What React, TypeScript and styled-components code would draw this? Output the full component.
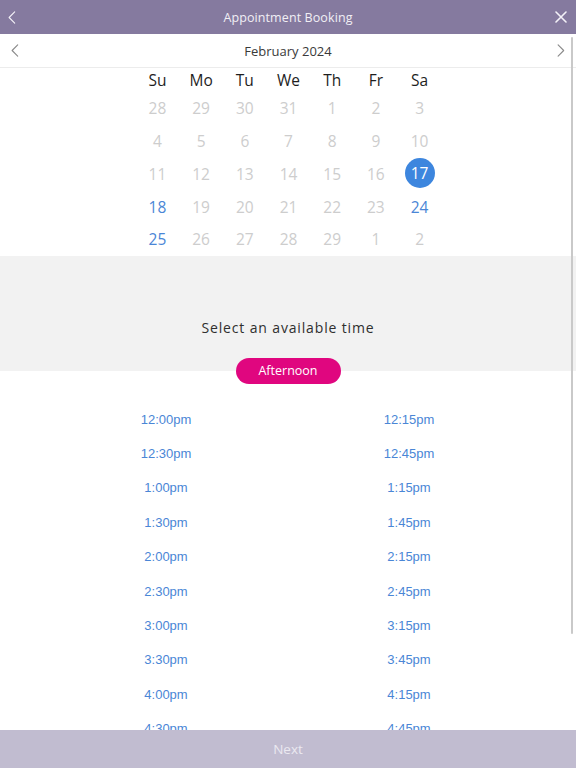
import React from "react";
import styled, { createGlobalStyle } from "styled-components";

const Global = createGlobalStyle`
  html, body { margin: 0; padding: 0; background: #fff; }
  body { font-family: "Open Sans", "Noto Sans", sans-serif; }
  * { box-sizing: border-box; }
`;

const Page = styled.div`
  position: relative;
  width: 576px;
  height: 768px;
  display: flex;
  flex-direction: column;
  overflow: hidden;
  background: #fff;
`;

const TopBar = styled.header`
  height: 34px;
  flex: none;
  background: #857a9f;
  display: grid;
  grid-template-columns: 40px 1fr 40px;
  align-items: center;
`;

const Title = styled.div`
  text-align: center;
  color: #f1eff5;
  font-size: 12.5px;
  letter-spacing: 0.1px;
`;

const IconButton = styled.div<{ $align: "left" | "right"; $inset: number }>`
  display: flex;
  justify-content: ${(p) => (p.$align === "left" ? "flex-start" : "flex-end")};
  padding: ${(p) => (p.$align === "left" ? `0 0 0 ${p.$inset}px` : `0 ${p.$inset}px 0 0`)};
  align-items: center;
  height: 100%;
`;

const MonthBar = styled.div`
  height: 34px;
  flex: none;
  display: grid;
  grid-template-columns: 40px 1fr 40px;
  align-items: center;
  border-bottom: 1px solid #ececec;
`;

const MonthLabel = styled.div`
  text-align: center;
  color: #3a3a3a;
  font-size: 13px;
`;

const Calendar = styled.div`
  flex: none;
  display: grid;
  grid-template-columns: repeat(7, 43.7px);
  grid-auto-rows: 32.75px;
  grid-template-rows: 24px;
  justify-content: center;
  padding-left: 1px;
  height: 188px;
`;

const WeekDay = styled.div`
  display: flex;
  align-items: center;
  justify-content: center;
  font-size: 15.5px;
  color: #1e1e1e;
`;

const Day = styled.div<{ $kind: "muted" | "open" | "selected" }>`
  display: flex;
  align-items: center;
  justify-content: center;
  font-size: 15.5px;
  color: ${(p) => (p.$kind === "muted" ? "#cdcdcd" : p.$kind === "open" ? "#4a86d6" : "#fff")};
`;

const Selected = styled.span`
  width: 30px;
  height: 30px;
  border-radius: 50%;
  background: #3d86de;
  display: flex;
  align-items: center;
  justify-content: center;
  color: #fff;
  margin-top: -1px;
`;

const TimeHeader = styled.section`
  flex: none;
  height: 115px;
  background: #f2f2f2;
  display: flex;
  justify-content: center;
  padding-top: 62px;
`;

const Prompt = styled.div`
  font-size: 14px;
  letter-spacing: 0.85px;
  color: #2f2f2f;
`;

const PillRow = styled.div`
  flex: none;
  display: flex;
  justify-content: center;
  margin-top: -13px;
  position: relative;
`;

const Pill = styled.div`
  width: 105px;
  height: 26px;
  border-radius: 13px;
  background: #e0067f;
  color: #fff;
  font-size: 12.5px;
  display: flex;
  align-items: center;
  justify-content: center;
  padding-bottom: 2px;
`;

const TimeList = styled.div`
  flex: 1;
  overflow: hidden;
  display: grid;
  grid-template-columns: repeat(2, 243px);
  grid-auto-rows: 34.4px;
  justify-content: center;
  padding-top: 18px;
  padding-right: 1px;
`;

const Time = styled.div`
  display: flex;
  align-items: center;
  justify-content: center;
  font-family: "Liberation Sans", Arial, sans-serif;
  font-size: 13px;
  color: #4a86d6;
`;

const Footer = styled.footer`
  flex: none;
  height: 38px;
  background: #c1bcd0;
  display: flex;
  align-items: center;
  justify-content: center;
  color: #ebe9f1;
  font-size: 13.5px;
`;

const ScrollThumb = styled.div`
  position: absolute;
  right: 3px;
  top: 37px;
  width: 2.5px;
  height: 597px;
  border-radius: 2px;
  background: #c9c9c9;
`;

const Chevron = ({ dir, color, size }: { dir: "l" | "r"; color: string; size: number }) => (
  <svg width={size * 0.6} height={size} viewBox="0 0 8 14" fill="none">
    <polyline
      points={dir === "l" ? "7,1 1,7 7,13" : "1,1 7,7 1,13"}
      stroke={color}
      strokeWidth="1.2"
      strokeLinecap="round"
      strokeLinejoin="round"
    />
  </svg>
);

const Close = () => (
  <svg width="12" height="12" viewBox="0 0 12 12">
    <path d="M1 1 L11 11 M11 1 L1 11" stroke="#f4f2f8" strokeWidth="1.6" strokeLinecap="round" />
  </svg>
);

const weekDays = ["Su", "Mo", "Tu", "We", "Th", "Fr", "Sa"];
const days: { n: number; kind: "muted" | "open" | "selected" }[] = [
  28, 29, 30, 31, 1, 2, 3, 4, 5, 6, 7, 8, 9, 10, 11, 12, 13, 14, 15, 16, 17, 18, 19, 20, 21, 22, 23, 24, 25, 26,
  27, 28, 29, 1, 2,
].map((n, i) => ({
  n,
  kind: i === 20 ? "selected" : i === 21 || i === 27 || i === 28 ? "open" : "muted",
}));

const times = [
  "12:00pm", "12:15pm", "12:30pm", "12:45pm", "1:00pm", "1:15pm", "1:30pm", "1:45pm",
  "2:00pm", "2:15pm", "2:30pm", "2:45pm", "3:00pm", "3:15pm", "3:30pm", "3:45pm",
  "4:00pm", "4:15pm", "4:30pm", "4:45pm",
];

export default function App() {
  return (
    <>
      <Global />
      <Page>
        <TopBar>
          <IconButton $align="left" $inset={8}>
            <Chevron dir="l" color="#f4f2f8" size={13} />
          </IconButton>
          <Title>Appointment Booking</Title>
          <IconButton $align="right" $inset={9}>
            <Close />
          </IconButton>
        </TopBar>
        <MonthBar>
          <IconButton $align="left" $inset={11}>
            <Chevron dir="l" color="#8a8a8a" size={13} />
          </IconButton>
          <MonthLabel>February 2024</MonthLabel>
          <IconButton $align="right" $inset={11}>
            <Chevron dir="r" color="#8a8a8a" size={13} />
          </IconButton>
        </MonthBar>
        <Calendar>
          {weekDays.map((d) => (
            <WeekDay key={d}>{d}</WeekDay>
          ))}
          {days.map((d, i) => (
            <Day key={i} $kind={d.kind}>
              {d.kind === "selected" ? <Selected>{d.n}</Selected> : d.n}
            </Day>
          ))}
        </Calendar>
        <TimeHeader>
          <Prompt>Select an available time</Prompt>
        </TimeHeader>
        <PillRow>
          <Pill>Afternoon</Pill>
        </PillRow>
        <TimeList>
          {times.map((t) => (
            <Time key={t}>{t}</Time>
          ))}
        </TimeList>
        <Footer>Next</Footer>
        <ScrollThumb />
      </Page>
    </>
  );
}
